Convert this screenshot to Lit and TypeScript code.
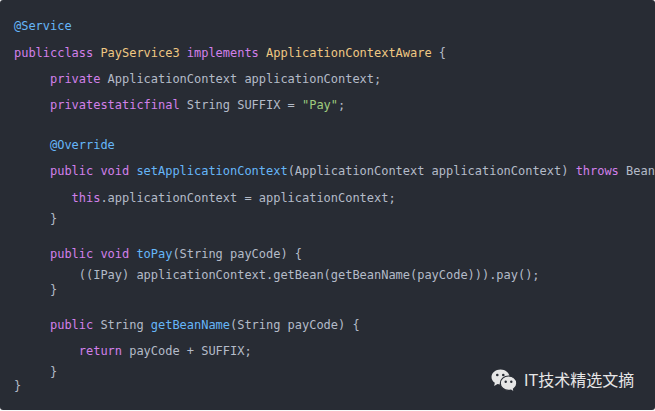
import { LitElement, html, css } from "lit";
import { customElement } from "lit/decorators.js";

type Tok = [string, string?];
interface Line { y: number; t: Tok[] }

const k = (s: string): Tok => [s, "k"];
const c = (s: string): Tok => [s, "c"];
const m = (s: string): Tok => [s, "m"];
const q = (s: string): Tok => [s, "s"];
const p = (s: string): Tok => [s];

// y = vertical centre of each source line in the screenshot
const lines: Line[] = [
  { y: 26, t: [m("@Service")] },
  { y: 53, t: [k("publicclass"), p(" "), c("PayService3"), p(" "), k("implements"), p(" "), c("ApplicationContextAware"), p(" {")] },
  { y: 79, t: [p("     "), k("private"), p(" ApplicationContext applicationContext;")] },
  { y: 105, t: [p("     "), k("privatestaticfinal"), p(" String SUFFIX = "), q('"Pay"'), p(";")] },
  { y: 145, t: [p("     "), m("@Override")] },
  { y: 171, t: [p("     "), k("public"), p(" "), k("void"), p(" "), m("setApplicationContext"), p("(ApplicationContext applicationContext) "), k("throws"), p(" Bean")] },
  { y: 198, t: [p("        "), k("this"), p(".applicationContext = applicationContext;")] },
  { y: 219, t: [p("     }")] },
  { y: 254, t: [p("     "), k("public"), p(" "), k("void"), p(" "), m("toPay"), p("(String payCode) {")] },
  { y: 275, t: [p("         ((IPay) applicationContext.getBean(getBeanName(payCode))).pay();")] },
  { y: 290, t: [p("     }")] },
  { y: 325, t: [p("     "), k("public"), p(" String "), m("getBeanName"), p("(String payCode) {")] },
  { y: 351, t: [p("         "), k("return"), p(" payCode + SUFFIX;")] },
  { y: 372, t: [p("     }")] },
  { y: 386, t: [p("}")] },
];

const LH = 14;

@customElement("app-root")
export class AppRoot extends LitElement {
  static styles = css`
    :host {
      display: block;
      width: 655px;
      height: 411px;
      background: #fbfbfb;
      overflow: hidden;
    }
    .block {
      position: relative;
      box-sizing: border-box;
      width: 655px;
      height: 410px;
      padding-left: 14px;
      background: #282c34;
      border-radius: 3px;
      overflow: hidden;
      color: #b4bbc8;
      font-family: "DejaVu Sans Mono", monospace;
      font-size: 12px;
      letter-spacing: -0.025px;
    }
    .line {
      height: 14px;
      line-height: 14px;
      white-space: pre;
    }
    .k { color: #d280ea; }
    .c { color: #efc883; }
    .m { color: #66b6f8; }
    .s { color: #9fcc7f; }
    .mark {
      position: absolute;
      left: 491px;
      top: 369px;
      display: flex;
      align-items: center;
      gap: 7px;
      color: #e6e6e6;
      font-family: "Liberation Sans", "Noto Sans CJK SC", sans-serif;
      font-size: 16px;
      line-height: 24px;
      letter-spacing: 0;
    }
    .mark svg { display: block; }
  `;

  render() {
    let bottom = 0;
    return html`<div class="block">
      ${lines.map((l) => {
        const top = l.y - LH / 2;
        const gap = top - bottom;
        bottom = top + LH;
        return html`<div class="line" style="margin-top:${gap}px">${l.t.map(([s, cl]) =>
          cl ? html`<span class=${cl}>${s}</span>` : s
        )}</div>`;
      })}
      <div class="mark">
        <svg width="26" height="24" viewBox="0 0 26 24" aria-hidden="true">
          <path fill="#e6e6e6" d="M9.5 0.5C4.600 0.500 0.500 3.800 0.500 8c0 2.400 1.300 4.400 3.300 5.800L3.200 17l3.300-1.900c1 .3 2 .5 3 .5 4.900 0 9-3.400 9-7.600S14.400.500 9.500.500z"/>
          <circle cx="6.300" cy="6" r="1.300" fill="#282c34"/>
          <circle cx="12.300" cy="6" r="1.300" fill="#282c34"/>
          <path fill="#e6e6e6" stroke="#282c34" stroke-width="1.200" d="M17.500 7c-4.500 0-8.200 3.200-8.200 7.200s3.700 7.200 8.200 7.200c.8 0 1.600-.1 2.400-.3l3.300 2.200-.7-3.200c2-1.300 3.300-3.500 3.300-5.900 0-4-3.800-7.200-8.300-7.200z"/>
          <circle cx="14.700" cy="12.800" r="1.200" fill="#282c34"/>
          <circle cx="20.300" cy="12.800" r="1.200" fill="#282c34"/>
        </svg>
        <span>IT技术精选文摘</span>
      </div>
    </div>`;
  }
}
